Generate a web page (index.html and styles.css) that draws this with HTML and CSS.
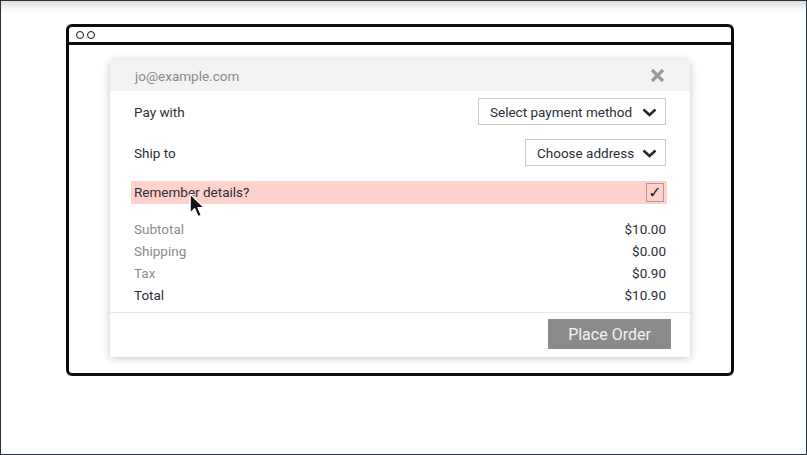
FILE: index.html
```html
<!DOCTYPE html>
<html>
<head>
<meta charset="utf-8">
<link rel="stylesheet" href="styles.css">
</head>
<body>
<div class="screen">
  <div class="window">
    <div class="titlebar"><span class="dot"></span><span class="dot"></span></div>
    <div class="content">
      <div class="dialog">
        <div class="dlg-head">
          <span class="email">jo@example.com</span>
          <svg class="close" width="15" height="15" viewBox="0 0 15 15"><path d="M2 2 L13 13 M13 2 L2 13" stroke="#9a9a9a" stroke-width="3.2" stroke-linecap="butt"/></svg>
        </div>
        <div class="dlg-body">
          <div class="row">
            <span class="label">Pay with</span>
            <div class="select pay"><span>Select payment method</span><svg class="chev" width="15" height="9" viewBox="0 0 15 9"><path d="M1.5 1.5 L7.5 7 L13.5 1.5" fill="none" stroke="#222831" stroke-width="2.5"/></svg></div>
          </div>
          <div class="row">
            <span class="label">Ship to</span>
            <div class="select ship"><span>Choose address</span><svg class="chev" width="15" height="9" viewBox="0 0 15 9"><path d="M1.5 1.5 L7.5 7 L13.5 1.5" fill="none" stroke="#222831" stroke-width="2.5"/></svg></div>
          </div>
          <div class="remember">
            <span class="label">Remember details?</span>
            <span class="check">&#10003;</span>
          </div>
          <div class="summary">
            <div class="line"><span class="muted">Subtotal</span><span>$10.00</span></div>
            <div class="line"><span class="muted">Shipping</span><span>$0.00</span></div>
            <div class="line"><span class="muted">Tax</span><span>$0.90</span></div>
            <div class="line"><span>Total</span><span>$10.90</span></div>
          </div>
        </div>
        <div class="dlg-foot">
          <button class="order">Place Order</button>
        </div>
      </div>
    </div>
  </div>
  <svg class="cursor" width="18" height="27" viewBox="0 0 16 24"><path d="M1 1 L1 18 L5 14 L8 21 L11 19.8 L8 13 L13.5 13 Z" fill="#111" stroke="#fff" stroke-width="1.2" stroke-linejoin="round"/></svg>
</div>
</body>
</html>
```

FILE: styles.css
```css
* { box-sizing: border-box; }
html, body { margin: 0; padding: 0; background: #fff; }
body { font-family: Roboto, "Noto Sans", Arial, sans-serif; color: #2b2f38; }

.screen {
  position: relative;
  width: 807px;
  height: 455px;
  border: 1px solid #27313a;
  box-shadow: inset 0 12px 12px -10px rgba(0,0,0,0.22);
  padding: 23px 0 0 65px;
}

.window {
  width: 668px;
  height: 352px;
  border: 3px solid #0b0b0d;
  border-radius: 6px;
  display: flex;
  flex-direction: column;
  background: #fff;
}

.titlebar {
  height: 18px;
  border-bottom: 3px solid #0b0b0d;
  display: flex;
  align-items: center;
  gap: 3px;
  padding-left: 7px;
  padding-top: 1px;
}
.dot {
  width: 8px;
  height: 8px;
  border: 1.6px solid #111;
  border-radius: 50%;
}

.content {
  padding: 15px 0 0 41px;
}

.dialog {
  width: 580px;
  height: 297px;
  background: #fff;
  box-shadow: 0 1px 8px rgba(0,0,0,0.22);
  display: flex;
  flex-direction: column;
}

.dlg-head {
  height: 31px;
  background: #f3f3f3;
  display: flex;
  align-items: center;
  justify-content: space-between;
  padding: 0 25px 0 25px;
}
.email { font-size: 13.5px; color: #8a8a8a; }

.dlg-body {
  padding: 7px 24px 0 24px;
  flex: 1;
  display: flex;
  flex-direction: column;
}

.row {
  display: flex;
  justify-content: space-between;
  align-items: center;
  height: 27px;
  margin-bottom: 14px;
}
.label { font-size: 13.5px; color: #2b2f38; }

.select {
  height: 27px;
  border: 1px solid #c9c9c9;
  display: flex;
  align-items: center;
  justify-content: space-between;
  padding: 0 8px 0 11px;
  font-size: 13.5px;
  color: #2b2f38;
}
.select.pay { width: 188px; }
.select.ship { width: 141px; }
.chev { margin-top: 1px; }

.remember {
  margin: 1px -1px 0 -3px;
  height: 23px;
  background: #ffd1cd;
  display: flex;
  align-items: center;
  justify-content: space-between;
  padding: 0 3px 0 3px;
}
.remember .label { margin-top: -2px; }
.check {
  width: 18px;
  height: 19px;
  border: 1px solid #ae9a98;
  display: flex;
  align-items: center;
  justify-content: center;
  font-size: 16px;
  font-weight: bold;
  color: #1b1f26;
  font-family: "DejaVu Sans", sans-serif;
}

.summary {
  margin-top: 14px;
}
.line {
  height: 22px;
  display: flex;
  justify-content: space-between;
  align-items: center;
  font-size: 13.5px;
  color: #2b2f38;
}
.muted { color: #8c8c8c; }

.dlg-foot {
  border-top: 1px solid #e8e8e8;
  height: 45px;
  display: flex;
  justify-content: flex-end;
  align-items: flex-start;
  padding: 6px 19px 0 0;
}
.order {
  width: 123px;
  height: 30px;
  background: #8a8a8a;
  border: none;
  color: #f3f3f3;
  font-family: Roboto, "Noto Sans", Arial, sans-serif;
  font-size: 16px;
  padding: 0;
}

.cursor {
  position: absolute;
  left: 188px;
  top: 192px;
}
```
